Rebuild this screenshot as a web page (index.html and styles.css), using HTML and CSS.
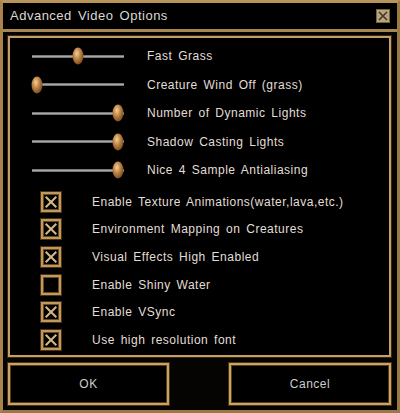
FILE: index.html
```html
<!DOCTYPE html>
<html lang="en">
<head>
    <meta charset="UTF-8">
    <title>Advanced Video Options</title>
    <link rel="stylesheet" href="styles.css">
</head>
<body>
    <div class="window">
        <div class="titlebar">
            <span class="title">Advanced Video Options</span>
            <span class="close">
                <svg width="10" height="10" viewBox="0 0 10 10">
                    <path d="M1 1 L9 9 M9 1 L1 9" stroke="#3a3630" stroke-width="1.6" fill="none"/>
                </svg>
            </span>
        </div>

        <div class="panel">
            <!-- sliders -->
            <div class="sliders">
                <div class="row">
                    <div class="track"><span class="knob" style="left: 50%;"></span></div>
                    <span class="label">Fast Grass</span>
                </div>
                <div class="row">
                    <div class="track"><span class="knob" style="left: 5%;"></span></div>
                    <span class="label">Creature Wind Off (grass)</span>
                </div>
                <div class="row">
                    <div class="track"><span class="knob" style="left: 93%;"></span></div>
                    <span class="label">Number of Dynamic Lights</span>
                </div>
                <div class="row">
                    <div class="track"><span class="knob" style="left: 93%;"></span></div>
                    <span class="label">Shadow Casting Lights</span>
                </div>
                <div class="row">
                    <div class="track"><span class="knob" style="left: 93%;"></span></div>
                    <span class="label">Nice 4 Sample Antialiasing</span>
                </div>
            </div>

            <!-- checkboxes -->
            <div class="checks">
                <div class="check-row">
                    <span class="box checked"></span>
                    <span class="label">Enable Texture Animations(water,lava,etc.)</span>
                </div>
                <div class="check-row">
                    <span class="box checked"></span>
                    <span class="label">Environment Mapping on Creatures</span>
                </div>
                <div class="check-row">
                    <span class="box checked"></span>
                    <span class="label">Visual Effects High Enabled</span>
                </div>
                <div class="check-row">
                    <span class="box"></span>
                    <span class="label">Enable Shiny Water</span>
                </div>
                <div class="check-row">
                    <span class="box checked"></span>
                    <span class="label">Enable VSync</span>
                </div>
                <div class="check-row">
                    <span class="box checked"></span>
                    <span class="label">Use high resolution font</span>
                </div>
            </div>
        </div>

        <div class="buttons">
            <div class="btn ok">OK</div>
            <div class="btn cancel">Cancel</div>
        </div>
    </div>
</body>
</html>
```

FILE: styles.css
```css
* {
    box-sizing: border-box;
    margin: 0;
    padding: 0;
}
body {
    background: #000;
    font-family: 'Liberation Sans', Arial, sans-serif;
    color: #e2ded6;
    width: 400px;
    height: 413px;
    overflow: hidden;
}
.window {
    width: 400px;
    height: 413px;
    border: 3px solid #9a7a44;
    border-top-color: #b8945a;
    border-left-color: #a8844c;
    background: #050402;
    display: flex;
    flex-direction: column;
}
.titlebar {
    height: 29px;
    border-bottom: 3px solid #a88650;
    display: flex;
    align-items: center;
    justify-content: space-between;
    padding: 0 7px 0 7px;
    background: #000;
}
.title {
    font-size: 13px;
    letter-spacing: 0.5px;
    word-spacing: 2px;
    color: #dcd8d0;
    margin-top: -2px;
}
.close {
    width: 14px;
    height: 14px;
    background: #bca47a;
    border: 1px solid #7a6440;
    display: flex;
    align-items: center;
    justify-content: center;
    margin-top: -1px;
}
.panel {
    margin: 4px 6px 0 5px;
    height: 321px;
    border: 2px solid #c4a068;
    box-shadow: 0 0 0 1px #3a2810;
    background: #000;
    padding: 4px 0 0 0;
}
.sliders {
    display: flex;
    flex-direction: column;
}
.row {
    height: 28.5px;
    display: flex;
    align-items: center;
}
.track {
    position: relative;
    width: 92px;
    height: 3px;
    margin-left: 22px;
    margin-right: 23px;
    background: linear-gradient(#5e5e5e, #a8a8a8, #5e5e5e);
}
.knob {
    position: absolute;
    top: 50%;
    width: 11px;
    height: 17px;
    border-radius: 50%;
    transform: translate(-50%, -50%);
    background: radial-gradient(ellipse at 40% 35%, #f4d0a0 0%, #c08848 35%, #7a4a1c 75%, #4a2a0c 100%);
}
.label {
    font-size: 12px;
    letter-spacing: 0.5px;
    word-spacing: 2px;
    color: #e2ded6;
    white-space: nowrap;
}
.checks {
    margin-top: 3.5px;
    display: flex;
    flex-direction: column;
}
.check-row {
    height: 27.6px;
    display: flex;
    align-items: center;
}
.box {
    width: 20px;
    height: 20px;
    margin-left: 31px;
    margin-right: 31px;
    border: 2px solid #c09a5c;
    box-shadow: inset 0 0 0 1px #6a4a20, 0 0 0 1px #4a3214;
    background: #000;
    position: relative;
}
.box.checked::before,
.box.checked::after {
    content: '';
    position: absolute;
    left: 50%;
    top: 50%;
    width: 15px;
    height: 2px;
    background: #d4b888;
}
.box.checked::before {
    transform: translate(-50%, -50%) rotate(45deg);
}
.box.checked::after {
    transform: translate(-50%, -50%) rotate(-45deg);
}
.buttons {
    display: flex;
    justify-content: space-between;
    margin: 6px 6px 0 5px;
}
.btn {
    height: 42px;
    border: 2px solid #c8a468;
    box-shadow: 0 0 0 1px #4a3214, inset 0 0 0 1px #5a3e18;
    background: #000;
    display: flex;
    align-items: center;
    justify-content: center;
    font-size: 12px;
    letter-spacing: 0.5px;
    color: #cccccc;
}
.btn.ok {
    width: 161px;
}
.btn.cancel {
    width: 162px;
}
```
